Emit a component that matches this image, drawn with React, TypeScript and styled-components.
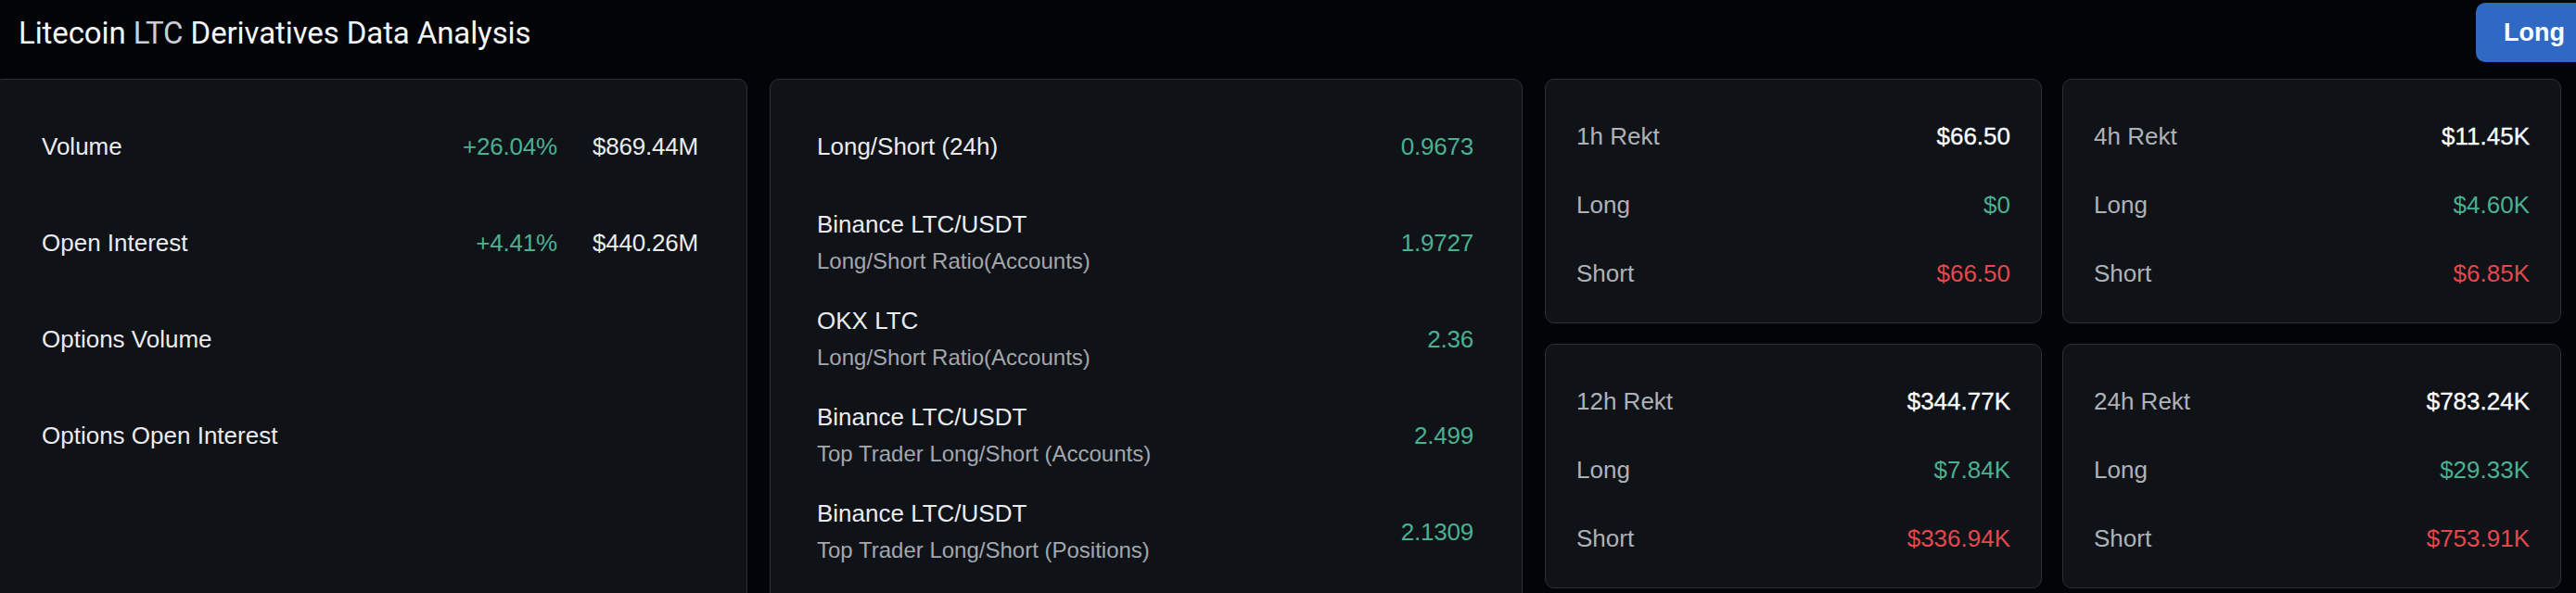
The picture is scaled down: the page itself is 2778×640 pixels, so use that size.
import React from 'react';
import styled, { createGlobalStyle } from 'styled-components';

const GlobalStyle = createGlobalStyle`
  html, body {
    margin: 0;
    padding: 0;
    background: #030407;
    overflow: hidden;
  }
  body {
    font-family: 'Liberation Sans', Arial, sans-serif;
    color: #eaecef;
  }
`;

const GREEN = '#4bb092';
const RED = '#e5474d';

type Tone = 'white' | 'green' | 'red';

const toneColor = (tone?: Tone) =>
  tone === 'green' ? GREEN : tone === 'red' ? RED : '#eaecef';

const overview = [
  { label: 'Volume', change: '+26.04%', value: '$869.44M' },
  { label: 'Open Interest', change: '+4.41%', value: '$440.26M' },
  { label: 'Options Volume' },
  { label: 'Options Open Interest' },
];

const ratios = [
  { title: 'Long/Short (24h)', value: '0.9673' },
  { title: 'Binance LTC/USDT', sub: 'Long/Short Ratio(Accounts)', value: '1.9727' },
  { title: 'OKX LTC', sub: 'Long/Short Ratio(Accounts)', value: '2.36' },
  { title: 'Binance LTC/USDT', sub: 'Top Trader Long/Short (Accounts)', value: '2.499' },
  { title: 'Binance LTC/USDT', sub: 'Top Trader Long/Short (Positions)', value: '2.1309' },
];

const rekt = [
  { period: '1h Rekt', total: '$66.50', long: '$0', short: '$66.50' },
  { period: '4h Rekt', total: '$11.45K', long: '$4.60K', short: '$6.85K' },
  { period: '12h Rekt', total: '$344.77K', long: '$7.84K', short: '$336.94K' },
  { period: '24h Rekt', total: '$783.24K', long: '$29.33K', short: '$753.91K' },
];

const App = () => {
  return (
    <>
      <GlobalStyle />
      <Page>
        <Header>
          <Title>
            Litecoin <Muted>LTC</Muted> Derivatives Data Analysis
          </Title>
          <SideButton>Long</SideButton>
        </Header>
        <Content>
          <Panel>
            {overview.map((row) => (
              <Row key={row.label}>
                <Label>{row.label}</Label>
                {row.value && (
                  <Figures>
                    <Value $tone="green">{row.change}</Value>
                    <Value>{row.value}</Value>
                  </Figures>
                )}
              </Row>
            ))}
          </Panel>
          <Panel>
            {ratios.map((row, i) => (
              <Row key={i}>
                <LabelStack>
                  <Label>{row.title}</Label>
                  {row.sub && <SubLabel>{row.sub}</SubLabel>}
                </LabelStack>
                <Value $tone="green">{row.value}</Value>
              </Row>
            ))}
          </Panel>
          <RektGrid>
            {rekt.map((card) => (
              <RektCard key={card.period}>
                <RektRow>
                  <RektLabel>{card.period}</RektLabel>
                  <RektValue $strong>{card.total}</RektValue>
                </RektRow>
                <RektRow>
                  <RektLabel>Long</RektLabel>
                  <RektValue $tone="green">{card.long}</RektValue>
                </RektRow>
                <RektRow>
                  <RektLabel>Short</RektLabel>
                  <RektValue $tone="red">{card.short}</RektValue>
                </RektRow>
              </RektCard>
            ))}
          </RektGrid>
        </Content>
      </Page>
    </>
  );
};

const Page = styled.div`
  width: 2768px;
  margin-left: -6px;
  padding-top: 3px;
  display: flex;
  flex-direction: column;
  gap: 18px;
`;

const Header = styled.header`
  height: 64px;
  display: flex;
  align-items: center;
  justify-content: space-between;
  padding-left: 26px;
`;

const Title = styled.h1`
  margin: 0;
  font-family: Roboto, 'Liberation Sans', sans-serif;
  font-weight: 400;
  font-size: 33px;
  letter-spacing: -0.1px;
  color: #f5f6f7;
`;

const Muted = styled.span`
  color: #c9ced6;
`;

const SideButton = styled.button`
  height: 64px;
  width: 126px;
  margin-right: -34px;
  padding: 0 0 0 30px;
  text-align: left;
  border: none;
  border-radius: 10px;
  background: #2f69c4;
  color: #ffffff;
  font-family: 'Liberation Sans', Arial, sans-serif;
  font-weight: 700;
  font-size: 27px;
`;

const Content = styled.div`
  display: flex;
  align-items: flex-start;
  gap: 24px;
`;

const Panel = styled.section`
  width: 812px;
  box-sizing: border-box;
  padding: 20px 52px 60px 50px;
  background: #0f1217;
  border: 1px solid #2c2f35;
  border-radius: 10px;
  display: flex;
  flex-direction: column;
  align-self: stretch;
  min-height: 640px;
`;

const Row = styled.div`
  height: 104px;
  display: flex;
  align-items: center;
  justify-content: space-between;
`;

const LabelStack = styled.div`
  display: flex;
  flex-direction: column;
  gap: 10px;
`;

const Label = styled.span`
  font-size: 26px;
  line-height: 30px;
  color: #eaecef;
`;

const SubLabel = styled.span`
  font-size: 24px;
  line-height: 30px;
  color: #a3a7ae;
`;

const Figures = styled.div`
  display: flex;
  gap: 38px;
`;

const Value = styled.span<{ $tone?: Tone }>`
  font-size: 26px;
  line-height: 30px;
  letter-spacing: -0.2px;
  color: ${(p) => toneColor(p.$tone)};
`;

const RektGrid = styled.div`
  width: 1096px;
  display: grid;
  grid-template-columns: 536px 538px;
  grid-auto-rows: 264px;
  column-gap: 22px;
  row-gap: 22px;
`;

const RektCard = styled.div`
  box-sizing: border-box;
  padding: 25px 33px 16px 33px;
  background: #0f1217;
  border: 1px solid #2c2f35;
  border-radius: 10px;
  display: flex;
  flex-direction: column;
`;

const RektRow = styled.div`
  height: 74px;
  display: flex;
  align-items: center;
  justify-content: space-between;
`;

const RektLabel = styled.span`
  font-size: 26px;
  color: #aeb2b8;
`;

const RektValue = styled.span<{ $tone?: Tone; $strong?: boolean }>`
  font-size: 26px;
  color: ${(p) => (p.$strong ? '#ffffff' : toneColor(p.$tone))};
  -webkit-text-stroke: ${(p) => (p.$strong ? '0.3px #ffffff' : '0')};
`;

export default App;
